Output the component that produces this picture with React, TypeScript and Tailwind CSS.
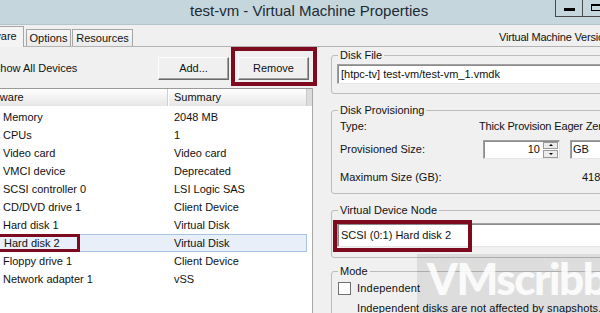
import React from "react";

const rows: [string, string][] = [
  ["Memory", "2048 MB"],
  ["CPUs", "1"],
  ["Video card", "Video card"],
  ["VMCI device", "Deprecated"],
  ["SCSI controller 0", "LSI Logic SAS"],
  ["CD/DVD drive 1", "Client Device"],
  ["Hard disk 1", "Virtual Disk"],
  ["Hard disk 2", "Virtual Disk"],
  ["Floppy drive 1", "Client Device"],
  ["Network adapter 1", "vSS"],
];

function Btn({ children }: { children: React.ReactNode }) {
  return (
    <div className="w-[71px] h-[23px] shrink-0 flex items-center justify-center border border-t-[#fdfdfd] border-l-[#fdfdfd] border-r-[#6a6a6a] border-b-[#6a6a6a] shadow-[inset_-1px_-1px_0_#a0a0a0] bg-[#f0f0f0]">
      {children}
    </div>
  );
}

function Group({
  label,
  className,
  children,
}: {
  label: string;
  className: string;
  children: React.ReactNode;
}) {
  return (
    <fieldset
      className={`w-[300px] shrink-0 border border-[#bcbcbc] rounded-[3px] px-[5px] ${className}`}
    >
      <legend className="ml-[1px] px-[2px] leading-[13px]">{label}</legend>
      {children}
    </fieldset>
  );
}

const sunken =
  "border border-t-[#a0a0a0] border-l-[#a0a0a0] border-r-[#e6e6e6] border-b-[#e6e6e6] shadow-[inset_1px_1px_0_#8c8c8c] bg-white";

export default function App() {
  return (
    <div className="relative w-[600px] h-[313px] overflow-hidden bg-[#f0f0f0] text-[11px] leading-[13px] text-[#111] font-['Liberation_Sans',Arial,sans-serif] flex flex-col">
      {/* Title bar */}
      <div className="h-[25px] shrink-0 bg-[#c5d6dc] border-b border-[#b3c4ca] flex">
        <div className="pl-[190px] pt-[2px] text-[15px] leading-[18px] text-[#1d2a33] whitespace-nowrap">
          test-vm - Virtual Machine Properties
        </div>
        <div className="ml-auto -mr-[11px] flex h-[17px] shrink-0">
          <div className="w-[28px] h-full border border-t-0 border-[#4a4a4a] flex items-center justify-center pt-[2px]">
            <div className="w-[11px] h-[3px] bg-black" />
          </div>
          <div className="w-[28px] h-full border border-t-0 border-l-0 border-[#4a4a4a] flex items-start justify-center pt-[4px]">
            <div className="w-[11px] h-[7px] border border-t-2 border-black" />
          </div>
        </div>
      </div>

      {/* Tab strip */}
      <div className="h-[22px] shrink-0 flex items-end border-b border-[#b4b4b4]">
        <div className="-ml-[38px] w-[62px] h-[21px] -mb-px shrink-0 bg-[#f4f4f4] border border-b-0 border-[#a6a6a6] pl-[6px] pt-[3px] whitespace-nowrap">
          Hardware
        </div>
        <div className="ml-[2px] w-[45px] h-[17px] shrink-0 bg-gradient-to-b from-[#f6f6f6] to-[#ebebeb] border border-b-0 border-[#a6a6a6] pt-[2px] text-center whitespace-nowrap">
          Options
        </div>
        <div className="ml-[1px] w-[61px] h-[17px] shrink-0 bg-gradient-to-b from-[#f6f6f6] to-[#ebebeb] border border-b-0 border-[#a6a6a6] pt-[2px] text-center whitespace-nowrap">
          Resources
        </div>
        <div className="self-start mt-[6px] ml-[366px] shrink-0 whitespace-nowrap tracking-[-0.2px]">
          Virtual Machine Version: 8
        </div>
      </div>

      {/* Content */}
      <div className="flex-1 flex min-h-0">
        {/* Left column */}
        <div className="w-[313px] shrink-0 flex flex-col">
          <div className="h-[41px] shrink-0 flex items-start">
            <div className="-ml-[7px] w-[165px] shrink-0 pt-[15px] whitespace-nowrap">
              Show All Devices
            </div>
            <div className="mt-[10px]">
              <Btn>Add...</Btn>
            </div>
            <div className="mt-[10px] ml-[9px]">
              <Btn>Remove</Btn>
            </div>
          </div>
          <div className="flex-1 bg-white border-t border-r border-t-[#9a9a9a] border-r-[#a8a8a8] flex flex-col">
            <div className="h-[17px] shrink-0 flex bg-gradient-to-b from-white to-[#e6e6e6]">
              <div className="w-[168px] shrink-0 border-r border-[#d0d0d0] pt-[2px] whitespace-nowrap">
                <span className="-ml-[24px]">Hardware</span>
              </div>
              <div className="flex-1 border-r border-[#c8c8c8] border-l border-l-white pl-[5px] pt-[2px]">
                Summary
              </div>
              <div className="w-[5px] shrink-0 bg-[#dcdcdc]" />
            </div>
            <div className="pt-[2px] flex flex-col">
              {rows.map(([a, b]) => {
                const sel = a === "Hard disk 2";
                return (
                  <div
                    key={a}
                    className={
                      sel
                        ? "relative h-[18px] mr-[5px] -ml-px flex items-center border border-[#a9c4e2] bg-[#e8eff8] whitespace-nowrap"
                        : "relative h-[18px] mr-[5px] flex items-center whitespace-nowrap"
                    }
                  >
                    <div className={sel ? "w-[174px] pl-[4px] shrink-0" : "w-[174px] pl-[3px] shrink-0"}>{a}</div>
                    <div>{b}</div>
                    {sel && (
                      <div className="absolute -left-[4px] -top-px w-[84px] h-[18px] border-[3px] border-[#7d0a1f]" />
                    )}
                  </div>
                );
              })}
            </div>
          </div>
        </div>

        {/* Right column */}
        <div className="flex-1 min-w-0 overflow-hidden pl-[18px] flex flex-col">
          <Group label="Disk File" className="mt-[2px] pb-[9px]">
            <div className={`mt-[2px] h-[20px] pl-[3px] flex items-center whitespace-nowrap ${sunken}`}>
              [htpc-tv] test-vm/test-vm_1.vmdk
            </div>
          </Group>

          <Group label="Disk Provisioning" className="mt-[10px] pb-[9px]">
            <div className="mt-[2px] h-[14px] flex items-center pl-[3px] whitespace-nowrap">
              <div className="w-[139px] shrink-0">Type:</div>
              <div className="tracking-[-0.15px]">Thick Provision Eager Zeroed</div>
            </div>
            <div className="mt-[7px] h-[19px] flex items-center pl-[3px] whitespace-nowrap">
              <div className="w-[143px] shrink-0">Provisioned Size:</div>
              <div className={`w-[77px] h-[19px] shrink-0 flex items-center ${sunken}`}>
                <div className="flex-1 text-right pr-[3px]">10</div>
                <div className="w-[15px] h-[16px] mr-px flex flex-col gap-px">
                  <div className="flex-1 bg-[#ececec] border border-[#9a9a9a] flex items-center justify-center">
                    <div className="w-0 h-0 border-l-[2px] border-r-[2px] border-b-[2px] border-l-transparent border-r-transparent border-b-black" />
                  </div>
                  <div className="flex-1 bg-[#ececec] border border-[#9a9a9a] flex items-center justify-center">
                    <div className="w-0 h-0 border-l-[2px] border-r-[2px] border-t-[2px] border-l-transparent border-r-transparent border-t-black" />
                  </div>
                </div>
              </div>
              <div className={`ml-[10px] w-[60px] h-[19px] shrink-0 pl-[2px] flex items-center ${sunken}`}>
                GB
              </div>
            </div>
            <div className="mt-[11px] h-[14px] flex items-center pl-[3px] whitespace-nowrap">
              <div className="w-[242px] shrink-0">Maximum Size (GB):</div>
              <div>418.32</div>
            </div>
          </Group>

          <Group label="Virtual Device Node" className="mt-[10px] pb-[10px]">
            <div className="relative mt-[6px] h-[24px]">
              <div className={`h-full pl-[3px] flex items-center whitespace-nowrap ${sunken}`}>
                SCSI (0:1) Hard disk 2
              </div>
              <div className="absolute -left-[4px] -top-[3px] w-[139px] h-[32px] border-4 border-[#7d0a1f]" />
            </div>
          </Group>

          <Group label="Mode" className="mt-[7px] pb-[10px]">
            <div className="mt-[4px] h-[13px] flex items-center whitespace-nowrap">
              <div className="ml-px w-[13px] h-[13px] shrink-0 bg-white border border-[#707070]" />
              <div className="ml-[6px] tracking-[0.2px]">Independent</div>
            </div>
            <div className="mt-[7px] pl-[20px] whitespace-nowrap tracking-[0.1px]">
              Independent disks are not affected by snapshots.
            </div>
          </Group>
        </div>
      </div>

      {/* Annotation: Remove button highlight */}
      <div className="absolute left-[231px] top-[47px] w-[86px] h-[39px] border-4 border-[#7d0a1f]" />

      {/* Watermark */}
      <div className="absolute left-[417px] top-[254px] right-0 bottom-0 bg-black/[0.08] pointer-events-none" />
      <div className="absolute left-[427px] top-[252px] text-[44px] leading-[52px] font-black tracking-[-1.5px] text-white/85 font-['Lato',sans-serif] whitespace-nowrap pointer-events-none">
        VMscribble
      </div>
    </div>
  );
}
